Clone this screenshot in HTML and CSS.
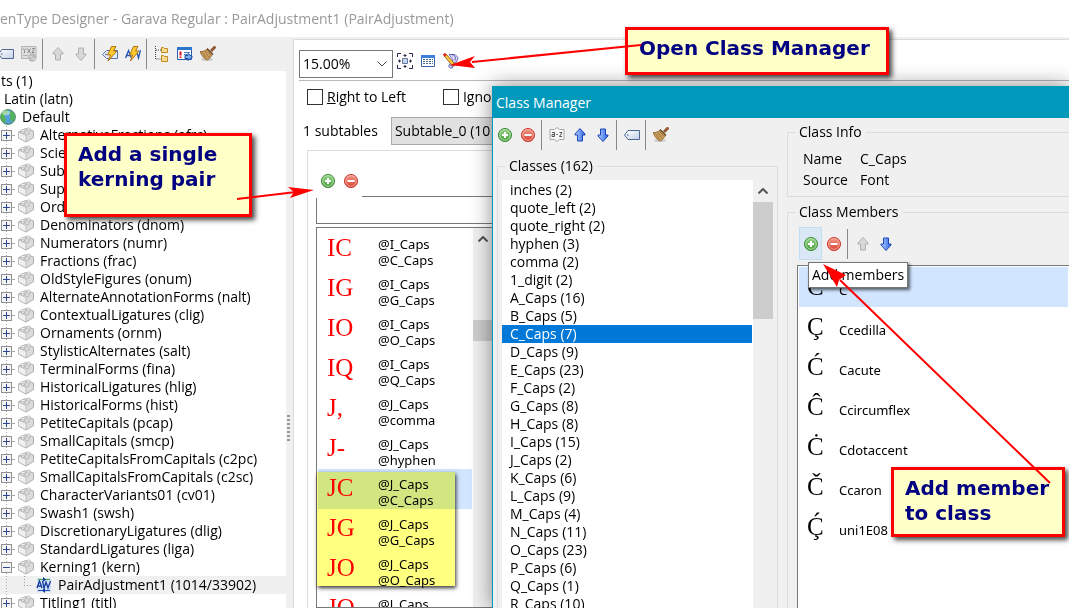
FILE: index.html
```html
<!DOCTYPE html>
<html lang="en">
<head>
<meta charset="utf-8">
<title>OpenType Designer</title>
<link rel="stylesheet" href="styles.css">
</head>
<body>
<svg class="defs" aria-hidden="true">
  <defs>
    <linearGradient id="green" x1="0" y1="0" x2="0" y2="1"><stop offset="0" stop-color="#9ad48c"/><stop offset="1" stop-color="#4a9e3c"/></linearGradient>
    <linearGradient id="red" x1="0" y1="0" x2="0" y2="1"><stop offset="0" stop-color="#f5988c"/><stop offset="1" stop-color="#d8402f"/></linearGradient>
    <linearGradient id="blue" x1="0" y1="0" x2="1" y2="0"><stop offset="0" stop-color="#b5d2ff"/><stop offset="1" stop-color="#2b62e6"/></linearGradient>
    <linearGradient id="tagfill" x1="0" y1="0" x2="1" y2="1"><stop offset="0" stop-color="#ffffff"/><stop offset="1" stop-color="#c3d0e6"/></linearGradient>
    <symbol id="add" viewBox="0 0 16 16"><circle cx="8" cy="8" r="6.6" fill="url(#green)" stroke="#459340"/><circle cx="8" cy="8" r="5.3" fill="none" stroke="#b9dfae" stroke-width=".8"/><path d="M8 5v6M5 8h6" stroke="#fff" stroke-width="2"/></symbol>
    <symbol id="remove" viewBox="0 0 16 16"><circle cx="8" cy="8" r="6.6" fill="url(#red)" stroke="#cc4238"/><circle cx="8" cy="8" r="5.3" fill="none" stroke="#f6b5ab" stroke-width=".8"/><path d="M4.500 8h7" stroke="#fff" stroke-width="2"/></symbol>
    <symbol id="up" viewBox="0 0 16 16"><path d="M8 1.500 13 7v1h-2.500v6h-5V8H3V7z" fill="url(#blue)" stroke="#1d45b5"/></symbol>
    <symbol id="down" viewBox="0 0 16 16"><path d="M8 14.500 13 9V8h-2.500V2h-5v6H3v1z" fill="url(#blue)" stroke="#1d45b5"/></symbol>
    <symbol id="upoff" viewBox="0 0 16 16"><path d="M8 1.500 13 7v1h-2.500v6h-5V8H3V7z" fill="#d8d8d8" stroke="#b0b0b0"/></symbol>
    <symbol id="downoff" viewBox="0 0 16 16"><path d="M8 14.500 13 9V8h-2.500V2h-5v6H3v1z" fill="#d8d8d8" stroke="#b0b0b0"/></symbol>
    <symbol id="tag" viewBox="0 0 16 16"><path d="M.5 8 4 3.500h11.500v9H4z" fill="url(#tagfill)" stroke="#4f6791"/><circle cx="3.800" cy="8" r=".8" fill="#4f6791"/></symbol>
    <symbol id="tagbolt" viewBox="0 0 16 16"><path d="M.5 8.500 4.500 4.500h11v8h-11z" fill="#e6ecf7" stroke="#5b75a8"/><circle cx="4" cy="8.500" r=".8" fill="#3c5588"/><path d="M9.500.5H14L11.500 5h3.500L6 15l2.500-6H5.500z" fill="#ffca2e" stroke="#a56c0b" stroke-width=".9"/></symbol>
    <symbol id="avbolt" viewBox="0 0 16 16"><path d="M.5 12 3.500 4.500l2.500 7M1.500 9.500h3M11.500 5l2 7 2-8" fill="none" stroke="#2254b5" stroke-width="1.300"/><path d="M8.500.5H13L10.500 5H14L5.500 15l2-6H4.500z" fill="#ffca2e" stroke="#a56c0b" stroke-width=".9"/></symbol>
    <symbol id="xyz" viewBox="0 0 16 16"><path d="M.5.5h14.500v12H.5z" fill="#dedede" stroke="#b5b5b5"/><path d="m2 2.500 1.500 2 1.500-2M3.500 4.500v2.500M6.500 2.500l3 4.500M9.500 2.500l-3 4.500M11 2.500h2.500L11 6.500h2.500" fill="none" stroke="#8b8b8b"/><path d="M2 9.500h5" stroke="#b0b0b0"/><circle cx="11.300" cy="11.500" r="4.200" fill="#b9b9b9"/><path d="M8.500 10.500h3M10.500 13h4" stroke="#dadada" stroke-width="1.500"/></symbol>
    <symbol id="az" viewBox="0 0 16 16"><path d="M1 2.500h4.500L8 .5l2.500 2H15v10h-4.500l-2.500 2-2.500-2H1z" fill="#f7f7f7" stroke="#a8a8a8"/><path d="M3 5.500h2.500v4H3V7.500h2.500M10.500 5.500H13l-2.500 4H13M7.300 7.500h1.500" fill="none" stroke="#555"/></symbol>
    <symbol id="broom" viewBox="0 0 16 16"><ellipse cx="7" cy="13.500" rx="6" ry="1.600" fill="#cdcdcd"/><path d="m11 5 4.500-4.500" stroke="#935a35" stroke-width="3"/><path d="M0 5.500c3 .5 5-1 7.500-2.500l5 5c-1 2-2 4-5 6C4.500 13.500 1.500 9.500 0 5.500z" fill="#cda061" stroke="#8a5f2c" stroke-width=".8"/><path d="m2.500 6.500 4 6M5 5.500l4 6M7 4.500l4 5" stroke="#93672f" stroke-width=".8"/><path d="m7 2.500 6 6" stroke="#6f5334" stroke-width="1.600"/></symbol>
    <symbol id="treeicon" viewBox="0 0 16 16"><path d="M1.500 0v13h6M2 4h6" fill="none" stroke="#444" stroke-dasharray="1 1"/><path d="M7.500 1.500h2l1 1h3v4h-6zM7.500 9.500h2l1 1h3v5h-6z" fill="#f8db91" stroke="#c08a25"/></symbol>
    <symbol id="props" viewBox="0 0 16 16"><path d="M.5 1.500h14v12H.5z" fill="#fff" stroke="#235dac"/><path d="M0 1h15v3H0z" fill="#2c74cd"/><path d="M3.500 5.500v4M3.500 10.500v1.500" stroke="#d11" stroke-width="2"/><path d="M7 6.500h6M7 8.500h3" stroke="#4685cc"/><path d="M8 9.500h3V7.500l4.500 3.500-4.500 3.500v-2H8z" fill="#79aff1" stroke="#1d4e9c"/></symbol>
    <symbol id="brick" viewBox="0 0 16 16"><path d="m.5 5 7-3.500L15.500 4v6.500L8 15 .500 11z" fill="#dcdcdc" stroke="#a7a7a7" stroke-width=".9"/><path d="m.5 5 7.500 3.500V15L.500 11z" fill="#f0f0f0" stroke="#b5b5b5" stroke-width=".7"/><path d="M3 3.500v2c1 1 3 1 4 0v-2M8.500 2v2c1 1 3 1 4 0V2M7 5v2c1 1 3 1 4 0V5" fill="#eee" stroke="#aaa" stroke-width=".7"/><ellipse cx="5" cy="3.500" rx="2" ry="1" fill="#fff" stroke="#aaa" stroke-width=".7"/><ellipse cx="10.500" cy="2" rx="2" ry="1" fill="#fff" stroke="#aaa" stroke-width=".7"/><ellipse cx="9" cy="5" rx="2" ry="1" fill="#fff" stroke="#aaa" stroke-width=".7"/></symbol>
    <symbol id="globe" viewBox="0 0 16 16"><circle cx="8" cy="8" r="7.400" fill="#549fd9" stroke="#4d8a59"/><path d="M2 3c2-2 4-2 6-2L7 5 4 7l2 3-1 4C1 12 0 8 2 3zM10 2c4 1 5 4 5 7l-3 4-2-3 1-3-2-2z" fill="#54b354"/><ellipse cx="6" cy="4" rx="4" ry="2.400" fill="#fff" opacity=".45"/></symbol>
    <symbol id="pairaw" viewBox="0 0 16 16"><path d="M1 1h14v14H1z" fill="#cfe0f8"/><path d="m1 11 2.500-7L6 11M2 9h3M6.500 4 8 11l2-6 2 6 2.500-7" fill="none" stroke="#163b9b" stroke-width="1.300"/><path d="M2 2.500h12" stroke="#42a046"/><path d="M2 13.500h12" stroke="#2355b5"/><path d="m7 0 3 2.500L7 5zM9 11l-3 2.500L9 16z" fill="#163b9b"/></symbol>
    <symbol id="fit" viewBox="0 0 16 16"><path d="M.5 4V.500H4M12 .5h3.500V4M15.500 12v3.500H12M4 15.500H.500V12" fill="none" stroke="#222a4c"/><path d="M5.500 5.500h5v5h-5z" fill="#c9d7ee" stroke="#64779f"/><path d="M8 1v3M8 12v3M1 8h3M12 8h3M6.500 2.500h3M6.500 13.500h3M2.500 6.500v3M13.500 6.500v3" stroke="#222a4c"/></symbol>
    <symbol id="grid" viewBox="0 0 16 16"><path d="M1.500 2.500h13v11h-13z" fill="#fff" stroke="#3766ac"/><path d="M1 2h14v3H1z" fill="#3b82d8"/><path d="M3 6.500h10M3 8.500h10M3 10.500h10" stroke="#4a6890" stroke-dasharray="2 1"/></symbol>
    <symbol id="classes" viewBox="0 0 16 16"><path d="M6 1.500h6l3 3-1.500 4.500-3 1-1 5H7l-1.500-2L10 7z" fill="#dcdcfb" stroke="#6d6dbd"/><path d="M8 1.500c4 0 5 3 4 6M7 12c2 2 4 1 4-1" fill="none" stroke="#5151ad"/><path d="m1 2.500 2-1.500 8 9 .5 3-3-1z" fill="#f9c83d" stroke="#915c13" stroke-width=".9"/><path d="M0 1.500 1.500 0 4 1.500 1.500 4z" fill="#e1271b"/></symbol>
  </defs>
</svg>

<header class="titlebar">enType Designer - Garava Regular : PairAdjustment1 (PairAdjustment)</header>

<main class="workspace">
  <section class="side">
    <div class="toolbar side-tools">
      <button aria-label="Tag"><svg><use href="#tag"/></svg></button>
      <button aria-label="Codes"><svg><use href="#xyz"/></svg></button>
      <i class="sep"></i>
      <button aria-label="Move up"><svg><use href="#upoff"/></svg></button>
      <button aria-label="Move down"><svg><use href="#downoff"/></svg></button>
      <i class="sep"></i>
      <button aria-label="Auto tag"><svg><use href="#tagbolt"/></svg></button>
      <button aria-label="Auto kern"><svg><use href="#avbolt"/></svg></button>
      <i class="sep"></i>
      <button aria-label="Tree"><svg><use href="#treeicon"/></svg></button>
      <button aria-label="Properties"><svg><use href="#props"/></svg></button>
      <button aria-label="Clean"><svg><use href="#broom"/></svg></button>
    </div>
    <ul class="tree">
      <li class="root">ts (1)</li>
      <li class="script">Latin (latn)</li>
      <li class="language"><svg><use href="#globe"/></svg>Default</li>
      <li class="node"><button class="twisty" aria-label="Expand"></button><svg><use href="#brick"/></svg>AlternativeFractions (afrc)</li>
      <li class="node"><button class="twisty" aria-label="Expand"></button><svg><use href="#brick"/></svg>Scie</li>
      <li class="node"><button class="twisty" aria-label="Expand"></button><svg><use href="#brick"/></svg>Sub</li>
      <li class="node"><button class="twisty" aria-label="Expand"></button><svg><use href="#brick"/></svg>Sup</li>
      <li class="node"><button class="twisty" aria-label="Expand"></button><svg><use href="#brick"/></svg>Ord</li>
      <li class="node"><button class="twisty" aria-label="Expand"></button><svg><use href="#brick"/></svg>Denominators (dnom)</li>
      <li class="node"><button class="twisty" aria-label="Expand"></button><svg><use href="#brick"/></svg>Numerators (numr)</li>
      <li class="node"><button class="twisty" aria-label="Expand"></button><svg><use href="#brick"/></svg>Fractions (frac)</li>
      <li class="node"><button class="twisty" aria-label="Expand"></button><svg><use href="#brick"/></svg>OldStyleFigures (onum)</li>
      <li class="node"><button class="twisty" aria-label="Expand"></button><svg><use href="#brick"/></svg>AlternateAnnotationForms (nalt)</li>
      <li class="node"><button class="twisty" aria-label="Expand"></button><svg><use href="#brick"/></svg>ContextualLigatures (clig)</li>
      <li class="node"><button class="twisty" aria-label="Expand"></button><svg><use href="#brick"/></svg>Ornaments (ornm)</li>
      <li class="node"><button class="twisty" aria-label="Expand"></button><svg><use href="#brick"/></svg>StylisticAlternates (salt)</li>
      <li class="node"><button class="twisty" aria-label="Expand"></button><svg><use href="#brick"/></svg>TerminalForms (fina)</li>
      <li class="node"><button class="twisty" aria-label="Expand"></button><svg><use href="#brick"/></svg>HistoricalLigatures (hlig)</li>
      <li class="node"><button class="twisty" aria-label="Expand"></button><svg><use href="#brick"/></svg>HistoricalForms (hist)</li>
      <li class="node"><button class="twisty" aria-label="Expand"></button><svg><use href="#brick"/></svg>PetiteCapitals (pcap)</li>
      <li class="node"><button class="twisty" aria-label="Expand"></button><svg><use href="#brick"/></svg>SmallCapitals (smcp)</li>
      <li class="node"><button class="twisty" aria-label="Expand"></button><svg><use href="#brick"/></svg>PetiteCapitalsFromCapitals (c2pc)</li>
      <li class="node"><button class="twisty" aria-label="Expand"></button><svg><use href="#brick"/></svg>SmallCapitalsFromCapitals (c2sc)</li>
      <li class="node"><button class="twisty" aria-label="Expand"></button><svg><use href="#brick"/></svg>CharacterVariants01 (cv01)</li>
      <li class="node"><button class="twisty" aria-label="Expand"></button><svg><use href="#brick"/></svg>Swash1 (swsh)</li>
      <li class="node"><button class="twisty" aria-label="Expand"></button><svg><use href="#brick"/></svg>DiscretionaryLigatures (dlig)</li>
      <li class="node"><button class="twisty" aria-label="Expand"></button><svg><use href="#brick"/></svg>StandardLigatures (liga)</li>
      <li class="node"><button class="twisty open" aria-label="Collapse"></button><svg><use href="#brick"/></svg>Kerning1 (kern)</li>
      <li class="leaf"><svg><use href="#pairaw"/></svg>PairAdjustment1 (1014/33902)</li>
      <li class="node"><button class="twisty" aria-label="Expand"></button><svg><use href="#brick"/></svg>Titling1 (titl)</li>
    </ul>
  </section>
  <div class="splitter"><i class="grip"></i></div>

  <section class="editor">
    <div class="editor-tools">
      <span class="combo zoom"><select aria-label="Zoom"><option>15.00%</option></select><svg viewBox="0 0 10 6"><path d="m.5.500 4.500 4.500L9.500.5"/></svg></span>
      <button aria-label="Fit"><svg><use href="#fit"/></svg></button>
      <button aria-label="Table"><svg><use href="#grid"/></svg></button>
      <button aria-label="Class Manager"><svg><use href="#classes"/></svg></button>
    </div>
    <div class="flags">
      <label><input type="checkbox"><span><u>R</u>ight to Left</span></label>
      <label><input type="checkbox"><span>Igno</span></label>
    </div>
    <div class="subtables">
      <label for="subtable">1 subtables</label>
      <span class="combo subtable"><select id="subtable"><option>Subtable_0 (10</option></select></span>
    </div>
    <div class="pairs">
      <div class="pair-tools">
        <button aria-label="Add pair"><svg><use href="#add"/></svg></button>
        <button aria-label="Remove pair"><svg><use href="#remove"/></svg></button>
      </div>
      <input class="pair-filter" aria-label="Filter pairs">
      <div class="pair-list">
        <ul>
          <li><b>IC</b><span>@I_Caps<br>@C_Caps</span></li>
          <li><b>IG</b><span>@I_Caps<br>@G_Caps</span></li>
          <li><b>IO</b><span>@I_Caps<br>@O_Caps</span></li>
          <li><b>IQ</b><span>@I_Caps<br>@Q_Caps</span></li>
          <li><b>J,</b><span>@J_Caps<br>@comma</span></li>
          <li><b>J-</b><span>@J_Caps<br>@hyphen</span></li>
          <li class="selected"><b>JC</b><span>@J_Caps<br>@C_Caps</span></li>
          <li><b>JG</b><span>@J_Caps<br>@G_Caps</span></li>
          <li><b>JO</b><span>@J_Caps<br>@O_Caps</span></li>
          <li><b>JQ</b><span>@J_Caps</span></li>
        </ul>
        <div class="scroll"><svg viewBox="0 0 10 6"><path d="m.5 5.500 4.500-4.500 4.500 4.500"/></svg><i class="thumb"></i></div>
        <div class="marker"></div>
      </div>
    </div>
  </section>
</main>

<section class="dialog" role="dialog" aria-label="Class Manager">
  <h1>Class Manager</h1>
  <div class="dialog-body">
    <div class="left">
      <div class="toolbar">
        <button aria-label="Add class"><svg><use href="#add"/></svg></button>
        <button aria-label="Remove class"><svg><use href="#remove"/></svg></button>
        <i class="sep"></i>
        <button aria-label="Sort"><svg><use href="#az"/></svg></button>
        <button aria-label="Up"><svg><use href="#up"/></svg></button>
        <button aria-label="Down"><svg><use href="#down"/></svg></button>
        <i class="sep"></i>
        <button aria-label="Rename"><svg><use href="#tag"/></svg></button>
        <i class="sep"></i>
        <button aria-label="Clean up"><svg><use href="#broom"/></svg></button>
      </div>
      <fieldset class="classes">
        <legend>Classes (162)</legend>
        <div class="class-box">
          <ul>
            <li>inches (2)</li><li>quote_left (2)</li><li>quote_right (2)</li><li>hyphen (3)</li><li>comma (2)</li><li>1_digit (2)</li><li>A_Caps (16)</li><li>B_Caps (5)</li><li class="selected">C_Caps (7)</li><li>D_Caps (9)</li><li>E_Caps (23)</li><li>F_Caps (2)</li><li>G_Caps (8)</li><li>H_Caps (8)</li><li>I_Caps (15)</li><li>J_Caps (2)</li><li>K_Caps (6)</li><li>L_Caps (9)</li><li>M_Caps (4)</li><li>N_Caps (11)</li><li>O_Caps (23)</li><li>P_Caps (6)</li><li>Q_Caps (1)</li><li>R_Caps (10)</li>
          </ul>
          <div class="scroll"><svg viewBox="0 0 10 6"><path d="m.5 5.500 4.500-4.500 4.500 4.500"/></svg><i class="thumb"></i></div>
        </div>
      </fieldset>
    </div>
    <div class="right">
      <fieldset class="info">
        <legend>Class Info</legend>
        <dl><dt>Name</dt><dd>C_Caps</dd><dt>Source</dt><dd>Font</dd></dl>
      </fieldset>
      <fieldset class="members">
        <legend>Class Members</legend>
        <div class="toolbar">
          <button aria-label="Add members" class="hot"><svg><use href="#add"/></svg></button>
          <button aria-label="Remove members"><svg><use href="#remove"/></svg></button>
          <i class="sep"></i>
          <button aria-label="Member up"><svg><use href="#upoff"/></svg></button>
          <button aria-label="Member down"><svg><use href="#down"/></svg></button>
          <div class="tooltip">Add members</div>
        </div>
        <ul>
          <li class="selected"><b>C</b><span>C</span></li>
          <li><b>Ç</b><span>Ccedilla</span></li>
          <li><b>Ć</b><span>Cacute</span></li>
          <li><b>Ĉ</b><span>Ccircumflex</span></li>
          <li><b>Ċ</b><span>Cdotaccent</span></li>
          <li><b>Č</b><span>Ccaron</span></li>
          <li><b>Ḉ</b><span>uni1E08</span></li>
        </ul>
      </fieldset>
    </div>
  </div>
</section>

<div class="note note-pair">Add a single<br>kerning pair</div>
<div class="note note-manager">Open Class Manager</div>
<div class="note note-member">Add member<br>to class</div>
<svg class="arrows" viewBox="0 0 1069 608" aria-hidden="true">
  <path d="M237 199 296 192M641 45 472 62M1050 483 840 280"/>
  <path class="head" d="m314 190-26-3 6 5-4 6zM450 65l25-9-5 6 5 6zM823 264l23 11-7 5-2 7z"/>
</svg>
</body>
</html>
```
FILE: styles.css
```css
* { box-sizing: border-box; }

body {
  position: relative;
  display: flex;
  flex-direction: column;
  height: 100vh;
  margin: 0;
  overflow: hidden;
  background: #f0f0f0;
  color: #000;
  font: 14px/18px "Open Sans", "Noto Sans", sans-serif;
}

ul, dl, dd { margin: 0; padding: 0; list-style: none; }
b { font-weight: 400; }
svg { display: block; flex: none; width: 16px; height: 16px; }
.defs { position: absolute; width: 0; height: 0; }

button {
  display: grid;
  place-items: center;
  flex: none;
  width: 23px;
  height: 32px;
  padding: 0;
  border: 0;
  background: none;
}

.titlebar {
  flex: none;
  height: 37px;
  line-height: 37px;
  background: #fff;
  color: #999;
  white-space: nowrap;
}

.workspace { display: flex; flex: 1; min-height: 0; }

.toolbar { display: flex; flex: none; align-items: center; }
.sep { flex: none; width: 1px; height: 30px; margin: 0 3px 0 2px; background: #888; }

/* Feature tree */
.side { display: flex; flex-direction: column; flex: none; width: 286px; }
.side-tools { height: 34px; margin-left: -6px; }

.tree { flex: 1; padding-top: 1px; background: #fff; overflow: hidden; white-space: nowrap; }
.tree li { display: flex; align-items: center; height: 18px; }
.tree .root { padding-left: 1px; }
.tree .script { padding-left: 4px; }
.tree .language { gap: 6px; }
.tree .node {
  gap: 6px;
  padding-left: 1px;
  background: linear-gradient(#aaa, #aaa) 12px 9px / 3px 1px no-repeat,
    repeating-linear-gradient(#aaa 0 1px, #fff 1px 3px) 6px 0 / 1px 100% no-repeat;
}
.tree .leaf {
  gap: 6px;
  padding-left: 36px;
  background: repeating-linear-gradient(90deg, #999 0 1px, transparent 1px 3px) 24px 9px / 9px 1px no-repeat,
    repeating-linear-gradient(#999 0 1px, transparent 1px 3px) 24px 0 / 1px 9px no-repeat,
    repeating-linear-gradient(#aaa 0 1px, transparent 1px 3px) 6px 0 / 1px 100% no-repeat,
    #f0f0f0;
}
.twisty {
  width: 11px;
  height: 11px;
  border: 1px solid #919191;
  background: linear-gradient(#2d4795, #2d4795) 4px 1px / 1px 7px no-repeat,
    linear-gradient(#2d4795, #2d4795) 1px 4px / 7px 1px no-repeat, #f4f4f4;
}
.twisty.open { background: linear-gradient(#2d4795, #2d4795) 1px 4px / 7px 1px no-repeat, #f4f4f4; }

.splitter { display: grid; flex: none; width: 7px; padding: 211px 2px 0 0; place-items: center; }
.grip { width: 3px; height: 26px; background: repeating-linear-gradient(#999 0 2px, transparent 2px 4px); }

/* Pair editor */
.editor {
  display: flex;
  flex-direction: column;
  flex: 1;
  min-width: 0;
  margin-top: 2px;
  border: 1px solid #dcdcdc;
  border-width: 1px 0 0 1px;
  background: #fff;
}
.editor-tools {
  display: flex;
  flex: none;
  align-items: center;
  height: 41px;
  margin-left: 5px;
  padding-top: 8px;
  border-bottom: 1px solid #b8b8b8;
}
.editor-tools button { height: 28px; margin-bottom: 6px; }

.combo { position: relative; display: block; flex: none; }
.combo select {
  width: 100%;
  height: 28px;
  padding: 0 3px;
  border: 1px solid #777;
  border-radius: 0;
  appearance: none;
  background: #fff;
  color: #000;
  font: inherit;
}
.combo svg { position: absolute; top: 11px; right: 6px; width: 10px; height: 6px; fill: none; stroke: #444; }
.zoom { width: 94px; }
.subtable { width: 380px; }
.subtable select { border-color: #aaa; background: #e1e1e1; }

.flags { display: flex; flex: none; gap: 37px; height: 32px; padding-left: 13px; }
.flags label { display: flex; align-items: center; gap: 4px; white-space: nowrap; }
.flags input {
  width: 16px;
  height: 16px;
  margin: 0;
  border: 1px solid #333;
  appearance: none;
  background: #fff;
}
.subtables { display: flex; flex: none; align-items: center; gap: 13px; height: 36px; padding-left: 9px; }

.pairs {
  display: flex;
  flex-direction: column;
  flex: 1;
  min-height: 0;
  margin: 1px 0 0 13px;
  padding-left: 8px;
  border: 1px solid #dcdcdc;
  border-width: 1px 0 0 1px;
}
.pair-tools { display: flex; position: relative; z-index: 1; width: 46px; height: 47px; padding-top: 13px; background: #fff; }
.pair-tools button { height: 33px; }
.pair-filter { flex: none; height: 28px; margin-top: -2px; border: 1px solid #777; background: #fff; }
.pair-list {
  position: relative;
  display: flex;
  flex: 1;
  min-height: 0;
  margin-top: 3px;
  border: 1px solid #777;
}
.pair-list ul { flex: none; width: 156px; padding: 1px 1px 0; overflow: hidden; }
.pair-list li { display: flex; height: 40px; font: 13px/16px "Noto Sans", "Open Sans", sans-serif; }
.pair-list span { padding-top: 7px; }
.pair-list b { width: 60px; padding-left: 9px; color: #f00; font: 25px/38px "Liberation Serif", serif; }
.selected { background: #d1e5ff; }

.scroll { flex: none; width: 20px; background: #f0f0f0; }
.scroll svg { width: 10px; height: 6px; margin: 8px auto; fill: none; stroke: #555; stroke-width: 2; }
.thumb { display: block; background: #cdcdcd; }
.pair-list .thumb { height: 21px; margin-top: 78px; }

.marker {
  position: absolute;
  top: 244px;
  left: 0;
  width: 138px;
  height: 114px;
  background: #ffff80;
  box-shadow: 1px 2px 4px #333;
  mix-blend-mode: multiply;
}

/* Class Manager window */
.dialog {
  position: absolute;
  top: 86px;
  right: 0;
  bottom: 0;
  left: 492px;
  display: flex;
  flex-direction: column;
  border-left: 1px solid #0099bc;
  background: #f0f0f0;
  box-shadow: 0 0 20px #0007;
}
.dialog h1 {
  flex: none;
  height: 32px;
  margin: 0;
  padding-left: 3px;
  background: #0099bc;
  color: #fff;
  font: 14px/34px "Open Sans", "Noto Sans", sans-serif;
}
.dialog-body { display: flex; flex: 1; gap: 9px; min-height: 0; padding-left: 4px; overflow: hidden; }
.left { display: flex; flex-direction: column; flex: none; width: 281px; }
.left > .toolbar { height: 34px; margin-left: -4px; }
.right { flex: 1; min-width: 0; }

fieldset { min-width: 0; margin: 0; padding: 0; border: 1px solid #dcdcdc; }
legend { margin-left: 7px; padding: 0 4px; line-height: 20px; }

.classes { flex: 1; margin-top: 4px; }
.class-box { display: flex; margin: 4px 4px 0; }
.class-box ul { flex: 1; padding: 1px 1px 0 0; background: #fff; }
.class-box li { padding-left: 8px; }
.class-box .selected { background: #0078d7; color: #fff; }
.class-box .thumb { height: 117px; }

.info { margin-top: 4px; border-right: 0; }
dl { display: grid; grid-template-columns: 57px 1fr; padding: 6px 15px; line-height: 21px; }

.members { margin-top: 5px; border-right: 0; }
.members .toolbar { position: relative; height: 33px; margin: 5px 0 0 11px; }
.members button { height: 33px; }
.members .hot { border: 1px solid #c2dcf2; background: #d9e8f4; }
.members ul { height: 400px; margin: 5px 0 0 9px; padding: 1px; border: 1px solid #777; border-right: 0; background: #fff; }
.members li { display: flex; height: 40px; padding-left: 8px; font: 13px/46px "Noto Sans", "Open Sans", sans-serif; }
.members b { width: 32px; font: 25px/40px "Liberation Serif", serif; }

.tooltip {
  position: absolute;
  top: 35px;
  left: 9px;
  padding: 3px;
  border: 1px solid #767676;
  background: #fff;
  box-shadow: 2px 2px 3px #0009;
  white-space: nowrap;
}

/* Annotations */
.note {
  position: absolute;
  padding: 6px 11px;
  border: 3px solid #f00;
  background: #ffffc8;
  box-shadow: 3px 3px 5px #000b;
  color: #000080;
  font: 700 20px/25px "DejaVu Sans", sans-serif;
  white-space: nowrap;
}
.note-pair { top: 133px; left: 64px; width: 188px; height: 84px; }
.note-manager { top: 27px; left: 625px; width: 264px; height: 48px; }
.note-member { top: 467px; left: 891px; width: 174px; height: 70px; }

.arrows { position: absolute; top: 0; left: 0; width: 1069px; height: 608px; fill: none; stroke: #f00; stroke-width: 2; pointer-events: none; }
.arrows .head { fill: #f00; stroke: none; }
```
